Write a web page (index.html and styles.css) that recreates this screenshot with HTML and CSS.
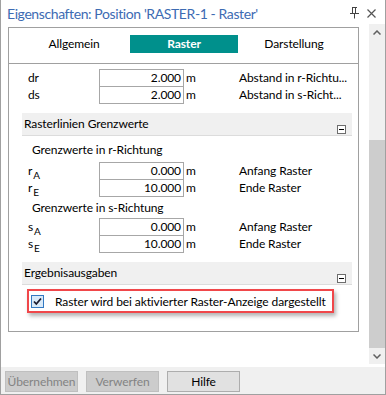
FILE: index.html
```html
<!DOCTYPE html>
<html>
<head>
<meta charset="utf-8">
<link rel="stylesheet" href="styles.css">
</head>
<body>
<div class="window">
  <div class="titlebar">
    <span class="title">Eigenschaften: Position 'RASTER-1 - Raster'</span>
    <span class="title-icons">
      <svg class="pin" width="9" height="12" viewBox="0 0 9 12">
        <path d="M2 0.5H7M2.5 0.5V6.5M5.5 0.5V6.5M0 6.5H9M4.5 6.5V11.5" stroke="#444" stroke-width="1" fill="none"/>
      </svg>
      <svg class="close" width="9" height="9" viewBox="0 0 9 9">
        <path d="M0.5 0.5L8.5 8.5M8.5 0.5L0.5 8.5" stroke="#555" stroke-width="1.2" fill="none"/>
      </svg>
    </span>
  </div>
  <div class="main">
    <div class="pane">
      <div class="frame">
        <div class="tabs">
          <div class="tab">Allgemein</div>
          <div class="tab active">Raster</div>
          <div class="tab">Darstellung</div>
        </div>
        <div class="form">
          <div class="row"><span class="lbl">dr</span><span class="input">2.000</span><span class="unit">m</span><span class="desc">Abstand in r-Richtu...</span></div>
          <div class="row"><span class="lbl">ds</span><span class="input">2.000</span><span class="unit">m</span><span class="desc">Abstand in s-Richt...</span></div>

          <div class="band"><span class="band-title">Rasterlinien Grenzwerte</span><span class="minus"></span></div>

          <div class="sub sub-r">Grenzwerte in r-Richtung</div>
          <div class="row"><span class="lbl">r<sub>A</sub></span><span class="input">0.000</span><span class="unit">m</span><span class="desc">Anfang Raster</span></div>
          <div class="row"><span class="lbl">r<sub>E</sub></span><span class="input">10.000</span><span class="unit">m</span><span class="desc">Ende Raster</span></div>
          <div class="sub sub-s">Grenzwerte in s-Richtung</div>
          <div class="row"><span class="lbl">s<sub>A</sub></span><span class="input">0.000</span><span class="unit">m</span><span class="desc">Anfang Raster</span></div>
          <div class="row"><span class="lbl">s<sub>E</sub></span><span class="input">10.000</span><span class="unit">m</span><span class="desc">Ende Raster</span></div>

          <div class="band"><span class="band-title">Ergebnisausgaben</span><span class="minus"></span></div>

          <div class="check-row">
            <span class="checkbox">
              <svg width="11" height="11" viewBox="0 0 11 11"><path d="M2 5.5L4.3 8L9 2.5" stroke="#1a1a2e" stroke-width="1.8" fill="none"/></svg>
            </span>
            <span class="check-label">Raster wird bei aktivierter Raster-Anzeige dargestellt</span>
          </div>
        </div>
      </div>
    </div>
    <div class="scrollbar">
      <div class="sb-btn">
        <svg width="8" height="5" viewBox="0 0 8 5"><path d="M0.5 4.5L4 1L7.5 4.5" stroke="#606060" stroke-width="1.5" fill="none"/></svg>
      </div>
      <div class="sb-track"><div class="sb-thumb"></div></div>
      <div class="sb-btn sb-down">
        <svg width="8" height="5" viewBox="0 0 8 5"><path d="M0.5 0.5L4 4L7.5 0.5" stroke="#606060" stroke-width="1.5" fill="none"/></svg>
      </div>
    </div>
  </div>
  <div class="footer">
    <div class="btn">Übernehmen</div>
    <div class="btn">Verwerfen</div>
    <div class="btn primary">Hilfe</div>
  </div>
</div>
</body>
</html>
```
FILE: styles.css
```css
* { box-sizing: border-box; }
body {
  margin: 0;
  font-family: Lato, "Noto Sans", sans-serif;
  font-size: 12px;
  letter-spacing: -0.1px;
  color: #000;
  background: #fff;
}
.window {
  width: 386px;
  height: 395px;
  border: 1px solid #a0a0a0;
  border-top: none;
  display: flex;
  flex-direction: column;
  background: #fff;
}
.titlebar {
  height: 24px;
  display: flex;
  align-items: center;
  padding: 2px 9px 0 6px;
}
.title {
  flex: 1;
  font-size: 14px;
  letter-spacing: -0.4px;
  color: #3d6bb3;
  white-space: nowrap;
}
.title-icons {
  display: flex;
  align-items: center;
  gap: 8px;
}
.main {
  display: flex;
  height: 343px;
}
.pane {
  width: 368px;
  padding: 3px 0 0 7px;
}
.frame {
  width: 351px;
  height: 305px;
  border: 1px solid #a0a0a0;
}
.tabs {
  height: 36px;
  border-bottom: 1px solid #a0a0a0;
  display: flex;
  gap: 2px;
  padding: 7px 0 0 11px;
}
.tab {
  width: 108px;
  height: 18px;
  line-height: 18px;
  text-align: center;
}
.tab.active {
  background: #00908c;
  color: #fff;
  font-weight: bold;
}
.form {
  padding-top: 5px;
}
.row {
  display: flex;
  height: 17px;
}
.lbl {
  width: 90px;
  padding-left: 19px;
  line-height: 17px;
  flex-shrink: 0;
}
.lbl sub {
  font-size: 10px;
  vertical-align: -4px;
  line-height: 0;
  margin-left: 1px;
}
.input {
  width: 85px;
  height: 18px;
  flex-shrink: 0;
  border: 1px solid #a7a7a7;
  text-align: right;
  padding-right: 2px;
  line-height: 16px;
  background: #fff;
}
.unit {
  width: 55px;
  padding-left: 2px;
  line-height: 17px;
  flex-shrink: 0;
}
.desc {
  line-height: 17px;
  white-space: nowrap;
}
.band {
  margin: 10px 6px 0 13px;
  height: 23px;
  background: #f0f0f0;
  border-bottom: 1px solid #dcdcdc;
  display: flex;
  justify-content: space-between;
  padding-left: 2px;
}
.band-title {
  line-height: 22px;
}
.minus {
  width: 9px;
  height: 9px;
  border: 1px solid #6d6d6d;
  background: #fff;
  align-self: flex-end;
  margin: 0 6px 1px 0;
  position: relative;
}
.minus::after {
  content: "";
  position: absolute;
  left: 1px;
  top: 3px;
  width: 5px;
  height: 1px;
  background: #000;
}
.sub {
  padding-left: 23px;
  line-height: 17px;
}
.sub-r { padding-top: 5px; padding-bottom: 4px; }
.sub-s { padding-top: 3px; padding-bottom: 2px; }
.check-row {
  margin: 4px 0 0 18px;
  width: 307px;
  height: 24px;
  border: 2px solid #f0474a;
  box-shadow: 2px 3px 4px rgba(0, 0, 0, 0.3);
  display: flex;
  align-items: center;
  padding-left: 2px;
}
.checkbox {
  width: 13px;
  height: 13px;
  border: 1px solid #3379c2;
  background: #d9eaf9;
  display: flex;
  align-items: center;
  justify-content: center;
  flex-shrink: 0;
}
.check-label {
  margin-left: 11px;
  white-space: nowrap;
}
.scrollbar {
  width: 16px;
  height: 340px;
  background: #f0f0f0;
  display: flex;
  flex-direction: column;
}
.sb-btn {
  height: 17px;
  display: flex;
  align-items: center;
  justify-content: center;
}
.sb-down { height: 16px; }
.sb-track {
  flex: 1;
  display: flex;
  flex-direction: column;
  justify-content: flex-end;
}
.sb-thumb {
  height: 208px;
  background: #cdcdcd;
}
.footer {
  height: 27px;
  background: #f0f0f0;
  display: flex;
  gap: 8px;
  padding: 4px 0 0 4px;
}
.btn {
  width: 73px;
  height: 21px;
  border: 1px solid #bfbfbf;
  background: #cccccc;
  color: #838383;
  display: flex;
  align-items: center;
  justify-content: center;
}
.btn.primary {
  background: #e1e1e1;
  border-color: #adadad;
  color: #000;
}
```
